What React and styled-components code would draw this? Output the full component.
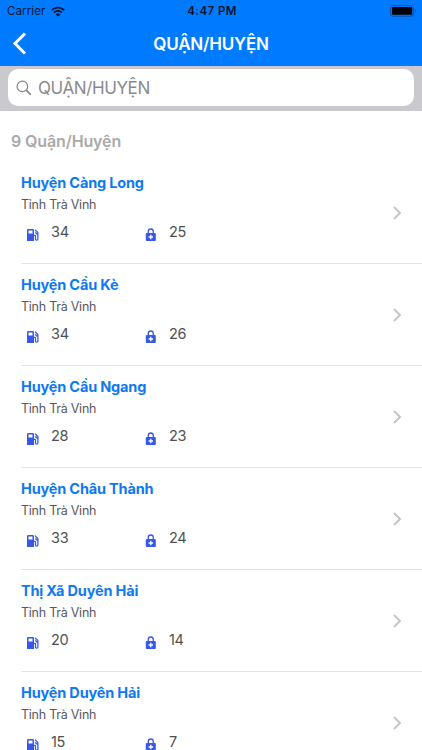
import React from 'react';
import styled, { createGlobalStyle } from 'styled-components';

const GlobalStyle = createGlobalStyle`
  * {
    box-sizing: border-box;
  }

  body {
    margin: 0;
    background: #fff;
    font-family: Inter, 'Liberation Sans', sans-serif;
  }
`;

const Screen = styled.div`
  height: 750px;
  display: flex;
  flex-direction: column;
  overflow: hidden;
`;

const Header = styled.header`
  height: 66px;
  flex-shrink: 0;
  background: #007aff;
`;

const StatusBar = styled.div`
  height: 22px;
  padding: 0 5px 0 7px;
  display: grid;
  grid-template-columns: 1fr auto 1fr;
  align-items: center;
  color: #04142c;
  font-size: 11.5px;
  line-height: 22px;
`;

const Carrier = styled.div`
  display: flex;
  align-items: center;
  gap: 6px;
  letter-spacing: 0.1px;
`;

const Clock = styled.div`
  font-weight: 600;
  letter-spacing: 0.45px;
`;

const BatteryIcon = styled.svg`
  justify-self: end;
`;

const NavBar = styled.div`
  height: 44px;
  padding: 0 12px;
  display: grid;
  grid-template-columns: 1fr auto 1fr;
  align-items: center;
`;

const NavTitle = styled.h1`
  margin: 0;
  color: #fff;
  font-size: 17px;
  font-weight: 600;
  line-height: 42px;
  letter-spacing: -0.2px;
`;

const SearchBar = styled.div`
  height: 45px;
  flex-shrink: 0;
  padding: 3px 8px 5px;
  background: #c9c9ce;
`;

const SearchField = styled.div`
  height: 37px;
  padding-left: 8px;
  display: flex;
  align-items: center;
  gap: 6px;
  border-radius: 10px;
  background: #fff;
  color: #8a8a8d;
  font-size: 17px;
  letter-spacing: -0.4px;
`;

const Count = styled.h2`
  height: 51px;
  flex-shrink: 0;
  margin: 0;
  padding: 20px 11px 0;
  color: #aaa;
  font-size: 16px;
  font-weight: 600;
  line-height: 20px;
  letter-spacing: -0.12px;
`;

const Row = styled.div`
  height: 102.1px;
  flex-shrink: 0;
  margin-left: 21px;
  padding-right: 20px;
  display: flex;
  align-items: center;
  justify-content: space-between;
  border-bottom: 1px solid #e4e4e6;
`;

const Details = styled.div`
  height: 100%;
  padding-top: 11px;
`;

const Name = styled.div`
  color: #0f79f2;
  font-size: 14.5px;
  font-weight: 700;
  line-height: 20px;
  letter-spacing: -0.18px;
`;

const Province = styled.div`
  margin-top: 3px;
  color: #58585a;
  font-size: 12.5px;
  line-height: 18px;
  letter-spacing: -0.25px;
`;

const Stats = styled.div`
  margin-top: 8px;
  display: grid;
  grid-template-columns: 118px 118px;
`;

const Stat = styled.div`
  padding-left: 5px;
  display: flex;
  gap: 11px;
  color: #505052;
  font-size: 14.5px;
  line-height: 20px;
  letter-spacing: -0.3px;

  svg {
    margin-top: 6px;
  }
`;

const WifiIcon = () => (
  <svg width='14' height='11' viewBox='0 0 14 11' fill='none' stroke='#04142c' strokeWidth='1.9'>
    <path d='M.8 4.1a9 9 0 0 1 12.4 0M3 6.5a5.8 5.8 0 0 1 8 0' />
    <path d='M7 10.6 4.8 8.4a3.2 3.2 0 0 1 4.4 0z' fill='#04142c' stroke='none' />
  </svg>
);

const Battery = () => (
  <BatteryIcon width='27' height='12' viewBox='0 0 27 12'>
    <rect x='.6' y='.6' width='23' height='10.6' rx='2.4' fill='none' stroke='#084f9f' />
    <rect x='2' y='2' width='20.2' height='7.8' rx='1' fill='#000' />
    <path d='M25 4.2c1.6.5 1.6 3 0 3.5z' fill='#084f9f' />
  </BatteryIcon>
);

const BackIcon = () => (
  <svg width='15' height='24' viewBox='0 0 15 24' fill='none' stroke='#fff' strokeWidth='3'>
    <path d='M13 1.5 3 11.5l10 10' />
  </svg>
);

const SearchIcon = () => (
  <svg width='16' height='16' viewBox='0 0 16 16' fill='none' stroke='#858588' strokeWidth='1.2'>
    <circle cx='6.4' cy='6.4' r='5.3' />
    <path d='m10.2 10.2 4.6 4.4' strokeWidth='1.7' />
  </svg>
);

const FuelIcon = () => (
  <svg width='14' height='14' viewBox='0 0 14 14' fill='#3558e8'>
    <path
      fillRule='evenodd'
      d='M2.3 1h4.4C7.4 1 8 1.6 8 2.3V13H1V2.3C1 1.6 1.6 1 2.3 1zM2.5 2.5v3h4v-3z'
    />
    <path
      d='M8 7.3h.7c.5 0 .8.4.8.8v3c0 1.5 2.4 1.5 2.4 0V4.4L9 1.6M11.9 6c-1.9.2-2.5-1-1.8-2.3'
      fill='none'
      stroke='#3558e8'
      strokeWidth='1.25'
    />
  </svg>
);

const LockIcon = () => (
  <svg width='14' height='14' viewBox='0 0 14 14'>
    <path d='M4.3 6V3.5a2.5 2.5 0 0 1 5 0V6' fill='none' stroke='#3558e8' strokeWidth='1.3' />
    <rect x='1.8' y='5' width='10' height='8' rx='1' fill='#3558e8' />
    <path d='M6.8 6.8v4.4M4.6 9H9' stroke='#fff' strokeWidth='1.3' />
  </svg>
);

const ChevronIcon = () => (
  <svg width='10' height='14' viewBox='0 0 10 14' fill='none' stroke='#c4c4c7' strokeWidth='1.9'>
    <path d='m2 1 6 6-6 6' />
  </svg>
);

const districts = [
  { name: 'Huyện Càng Long', stations: 34, locks: 25 },
  { name: 'Huyện Cầu Kè', stations: 34, locks: 26 },
  { name: 'Huyện Cầu Ngang', stations: 28, locks: 23 },
  { name: 'Huyện Châu Thành', stations: 33, locks: 24 },
  { name: 'Thị Xã Duyên Hải', stations: 20, locks: 14 },
  { name: 'Huyện Duyên Hải', stations: 15, locks: 7 },
];

const District = ({ name, stations, locks }) => (
  <Row>
    <Details>
      <Name>{name}</Name>
      <Province>Tỉnh Trà Vinh</Province>
      <Stats>
        <Stat>
          <FuelIcon />
          {stations}
        </Stat>
        <Stat>
          <LockIcon />
          {locks}
        </Stat>
      </Stats>
    </Details>
    <ChevronIcon />
  </Row>
);

const App = () => (
  <Screen>
    <GlobalStyle />
    <Header>
      <StatusBar>
        <Carrier>
          Carrier
          <WifiIcon />
        </Carrier>
        <Clock>4:47 PM</Clock>
        <Battery />
      </StatusBar>
      <NavBar>
        <BackIcon />
        <NavTitle>QUẬN/HUYỆN</NavTitle>
      </NavBar>
    </Header>
    <SearchBar>
      <SearchField>
        <SearchIcon />
        QUẬN/HUYỆN
      </SearchField>
    </SearchBar>
    <Count>9 Quận/Huyện</Count>
    {districts.map(district => (
      <District key={district.name} {...district} />
    ))}
  </Screen>
);

export default App;
